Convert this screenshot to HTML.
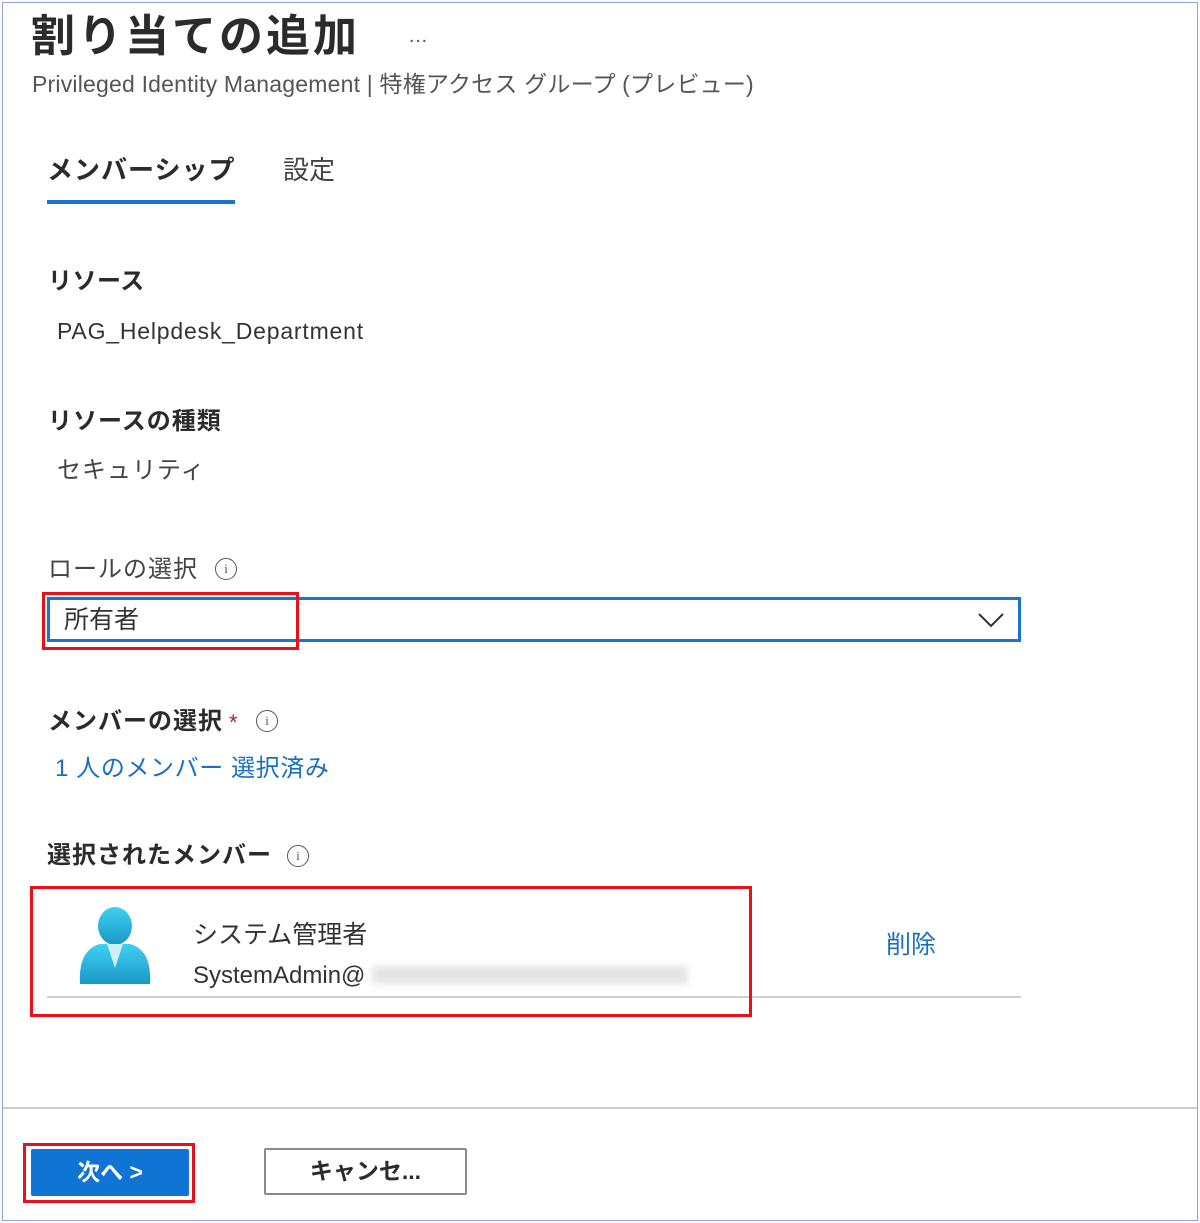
<!DOCTYPE html>
<html><head><meta charset="utf-8"><style>
*{margin:0;padding:0;box-sizing:border-box}
body{width:1200px;height:1223px;background:#fff;position:relative;overflow:hidden;font-family:"Liberation Sans","Noto Sans CJK JP",sans-serif;color:#323130}
.a{position:absolute;white-space:nowrap;line-height:1}
.b{font-weight:bold}
.info{position:absolute;width:22px;height:22px;border:1.5px solid #555;border-radius:50%;font-size:13px;text-align:center;line-height:19px;color:#555;font-family:"Liberation Serif",serif}
</style></head><body>
<div style="position:absolute;left:2px;top:2px;width:1196px;height:1219px;border:1.5px solid #8fa6d8"></div>
<div class="a b" style="left:31px;top:15px;font-size:44px;color:#2b2b2b;letter-spacing:3px">割り当ての追加</div>
<div class="a" style="left:408px;top:26px;font-size:20px;color:#555">…</div>
<div class="a" style="left:32px;top:73px;font-size:23px;color:#555;letter-spacing:0.2px">Privileged Identity Management | 特権アクセス グループ (プレビュー)</div>
<div class="a b" style="left:47px;top:157px;font-size:26px;letter-spacing:1px;color:#2b2b2b">メンバーシップ</div>
<div class="a" style="left:283px;top:157px;font-size:26px;color:#444">設定</div>
<div style="position:absolute;left:47px;top:200px;width:188px;height:4px;background:#1a74c9"></div>
<div class="a b" style="left:48px;top:270px;font-size:24px;color:#2b2b2b;letter-spacing:0.5px">リソース</div>
<div class="a" style="left:57px;top:320px;font-size:23px;letter-spacing:0.8px;color:#333">PAG_Helpdesk_Department</div>
<div class="a b" style="left:48px;top:410px;font-size:24px;color:#2b2b2b;letter-spacing:1px">リソースの種類</div>
<div class="a" style="left:57px;top:459px;font-size:24px;color:#444;letter-spacing:1px">セキュリティ</div>
<div class="a" style="left:48px;top:558px;font-size:24px;color:#444;letter-spacing:1px">ロールの選択</div>
<div class="info" style="left:215px;top:558px">i</div>
<div style="position:absolute;left:47px;top:597px;width:974px;height:45px;border:3px solid #1a74d0"></div>
<div class="a" style="left:64px;top:608px;font-size:25px;color:#333">所有者</div>
<svg style="position:absolute;left:976px;top:610px" width="30" height="20"><path d="M3 4 L15 16 L27 4" fill="none" stroke="#333" stroke-width="2"/></svg>
<div style="position:absolute;left:42px;top:592px;width:257px;height:58px;border:3px solid #e8101a"></div>
<div class="a b" style="left:48px;top:710px;font-size:24px;color:#2b2b2b;letter-spacing:1px">メンバーの選択</div>
<div class="a" style="left:229px;top:712px;font-size:22px;color:#a4262c">*</div>
<div class="info" style="left:256px;top:710px">i</div>
<div class="a" style="left:55px;top:757px;font-size:24px;color:#1a6fc0;letter-spacing:0.6px">1 人のメンバー 選択済み</div>
<div class="a b" style="left:47px;top:844px;font-size:24px;color:#2b2b2b;letter-spacing:1px">選択されたメンバー</div>
<div class="info" style="left:287px;top:845px">i</div>
<svg style="position:absolute;left:78px;top:906px" width="74" height="80">
<defs><linearGradient id="g" x1="0" y1="0" x2="0" y2="1"><stop offset="0" stop-color="#3fd0f2"/><stop offset="1" stop-color="#1a98c8"/></linearGradient></defs>
<ellipse cx="37" cy="20" rx="17" ry="19" fill="url(#g)"/>
<path d="M2 78 Q0 44 22 38 L52 38 Q74 44 72 78 Z" fill="url(#g)"/>
<path d="M29 38 L37 62 L45 38 Z" fill="#cfeef8"/>
</svg>
<div class="a" style="left:193px;top:923px;font-size:25px;color:#333">システム管理者</div>
<div class="a" style="left:193px;top:964px;font-size:24px;color:#333;letter-spacing:0px">SystemAdmin@</div>
<div style="position:absolute;left:372px;top:966px;width:316px;height:18px;background:#e4e4e4;filter:blur(4px)"></div>
<div class="a" style="left:886px;top:933px;font-size:25px;color:#1a6fc0">削除</div>
<div style="position:absolute;left:47px;top:996px;width:974px;height:2px;background:#d0d0d0"></div>
<div style="position:absolute;left:30px;top:886px;width:722px;height:131px;border:3px solid #e8101a"></div>
<div style="position:absolute;left:3px;top:1107px;width:1194px;height:2px;background:#ccc"></div>
<div style="position:absolute;left:23px;top:1143px;width:172px;height:60px;border:3px solid #e8101a"></div>
<div style="position:absolute;left:31px;top:1149px;width:158px;height:47px;background:#0f74d4;border-radius:2px;color:#fff;font-weight:bold;font-size:23px;text-align:center;line-height:47px">次へ &gt;</div>
<div style="position:absolute;left:264px;top:1148px;width:203px;height:47px;border:2px solid #8a8a8a;border-radius:2px;font-weight:bold;font-size:23px;text-align:center;line-height:43px;color:#2b2b2b">キャンセ...</div>
</body></html>
